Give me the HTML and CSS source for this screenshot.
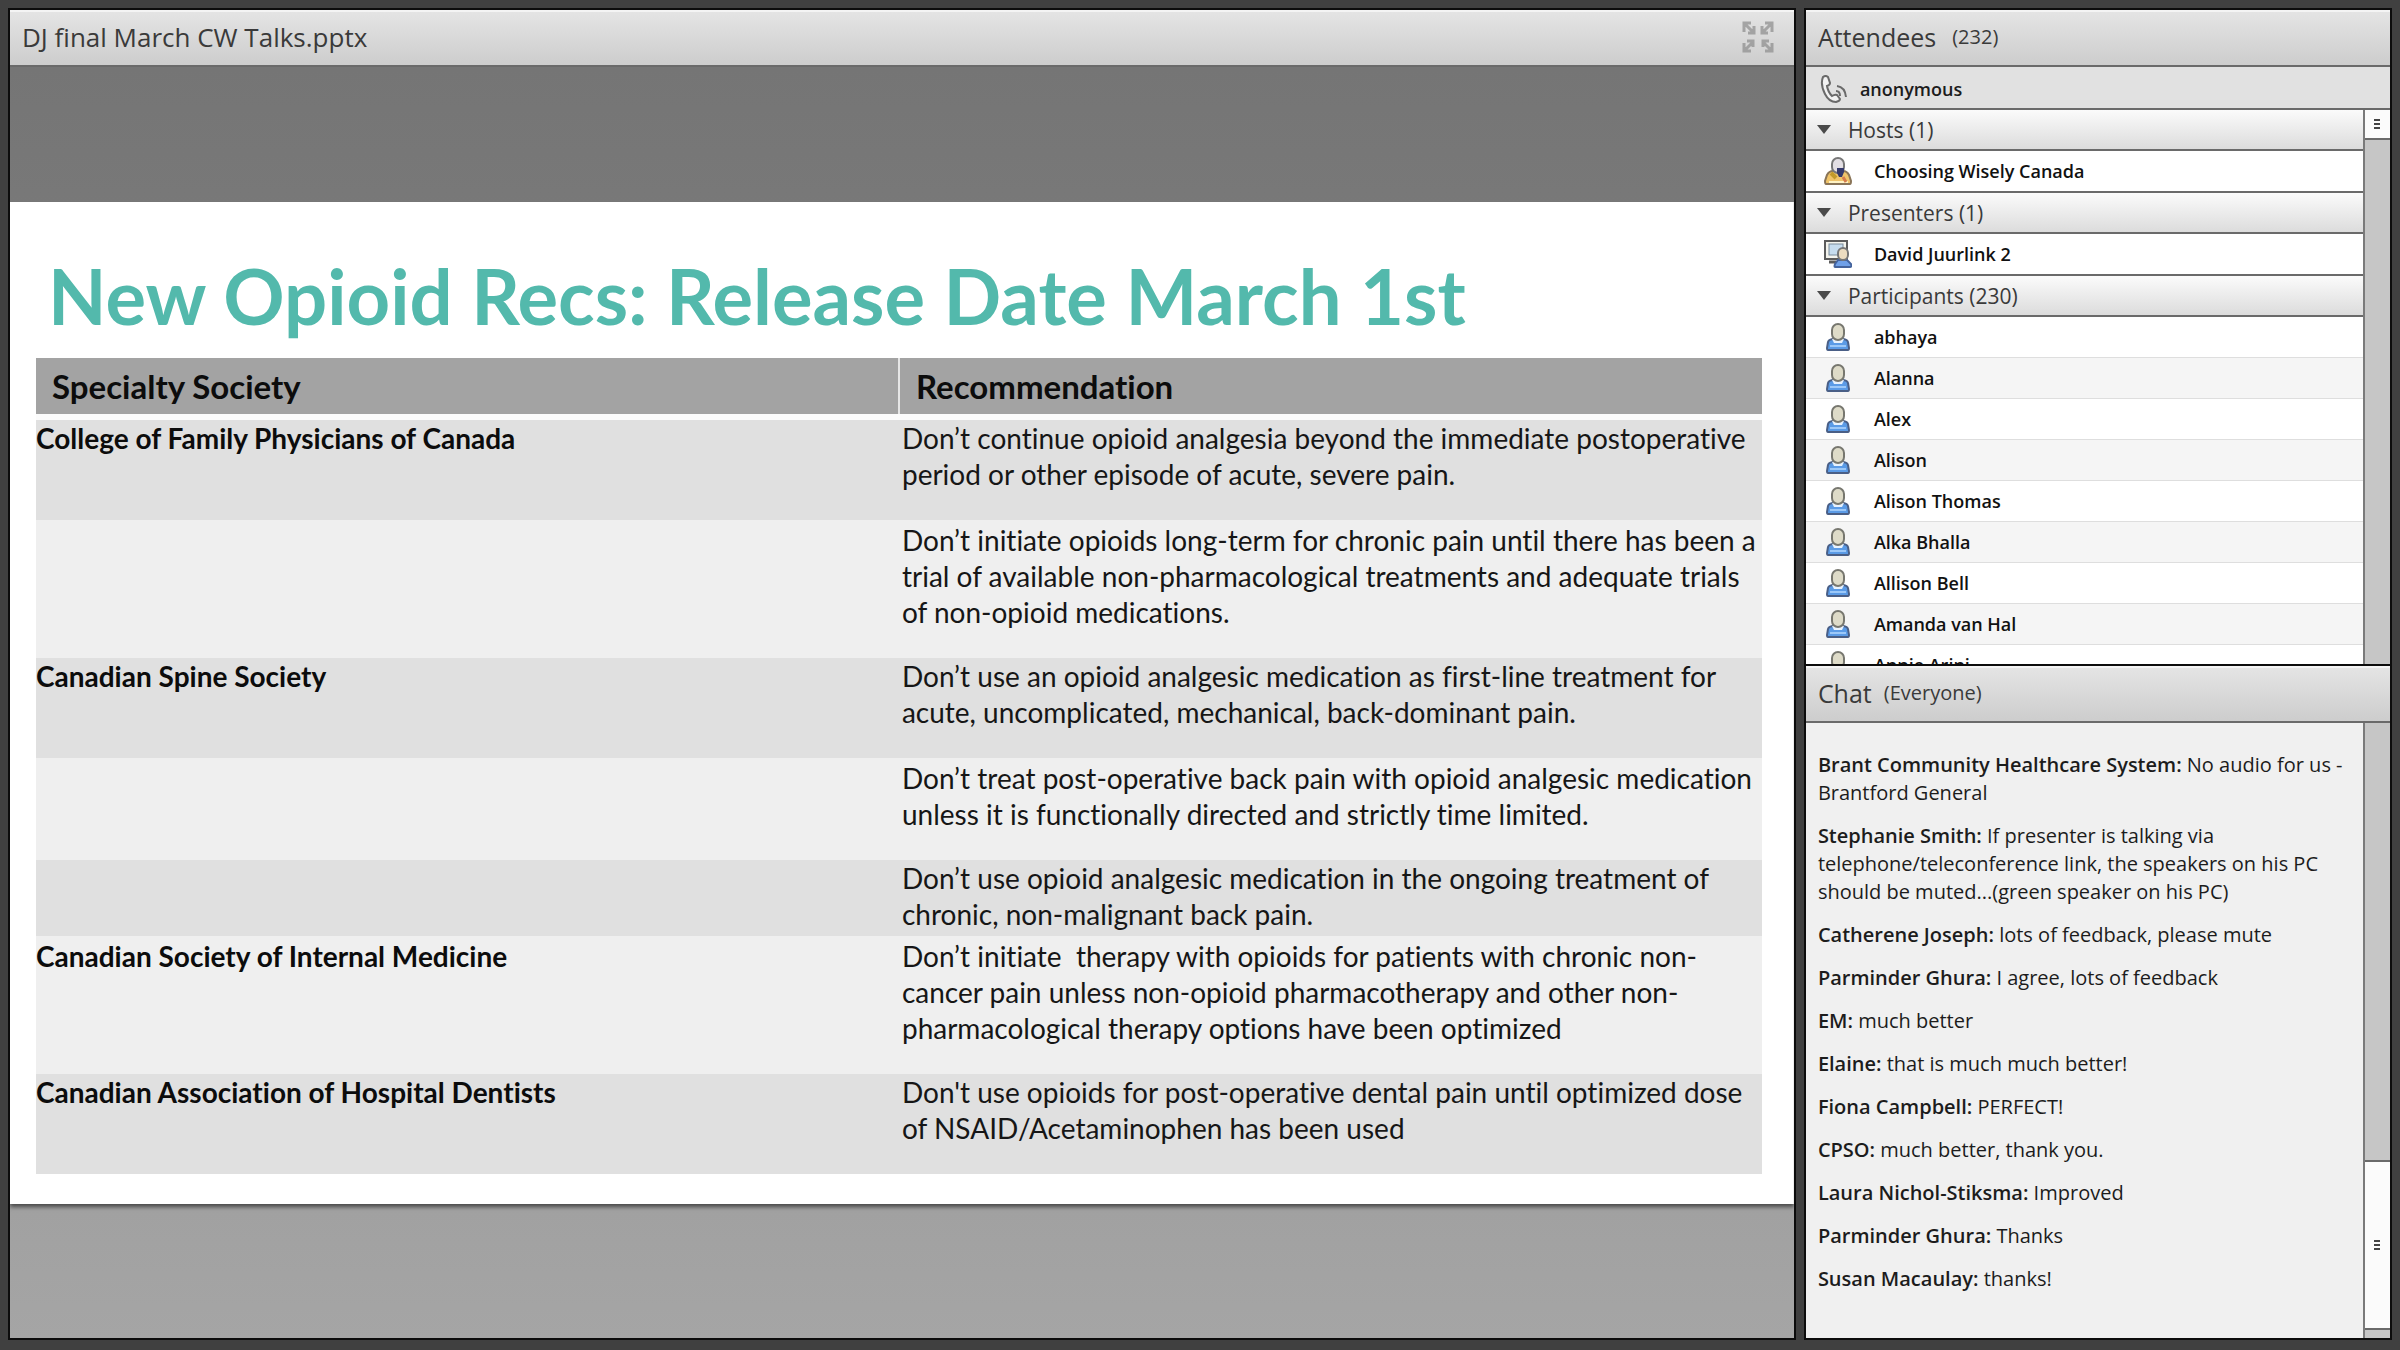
FILE: index.html
```html
<!DOCTYPE html>
<html lang="en">
<head>
<meta charset="utf-8">
<title>DJ final March CW Talks</title>
<link rel="stylesheet" href="styles.css">
</head>
<body>
<svg class="defs" aria-hidden="true">
  <symbol id="person" viewBox="0 0 24 28">
    <path d="M2 27 Q1 27 1 25 L2 19 Q3 16 8 16 H16 Q21 16 22 19 L23 25 Q23 27 22 27 Z" fill="#5b9be6" stroke="#4a5f86" stroke-width="2"/>
    <path d="M6 16 L8 20 H16 L18 16 Z" fill="#e8f2fd"/>
    <path d="M4 23 H20" stroke="#9cc8f8" stroke-width="2"/>
    <rect x="6" y="1" width="12" height="16" rx="6" fill="#dedbc8" stroke="#77776f" stroke-width="2"/>
  </symbol>
</svg>
<main class="room">
  <section class="pod share">
    <header class="bar">
      <h1 class="bar-title file">DJ final March CW Talks.pptx</h1>
      <button class="expand" type="button" aria-label="Full screen">
        <svg viewBox="0 0 32 32" width="32" height="32" fill="none" stroke="#8c8c8c" stroke-width="3">
          <path d="M2 11V2H9M3 3L12 12M12 5V12H6M30 11V2H23M29 3L20 12M20 5V12H26M2 22V30H9M3 29L11 21M5 20H11V26M30 22V30H23M29 29L21 21M27 20H21V26"/>
        </svg>
      </button>
    </header>
    <div class="stage">
      <article class="slide">
        <h2 class="slide-title">New Opioid Recs: Release Date March 1st</h2>
        <table class="recs">
          <thead>
            <tr><th scope="col">Specialty Society</th><th scope="col">Recommendation</th></tr>
          </thead>
          <tbody>
            <tr><th scope="row">College of Family Physicians of Canada</th><td>Don’t continue opioid analgesia beyond the immediate postoperative period or other episode of acute, severe pain.</td></tr>
            <tr class="lower"><td></td><td>Don’t initiate opioids long-term for chronic pain until there has been a trial of available non-pharmacological treatments and adequate trials of non-opioid medications.</td></tr>
            <tr><th scope="row">Canadian Spine Society</th><td>Don’t use an opioid analgesic medication as first-line treatment for acute, uncomplicated, mechanical, back-dominant pain.</td></tr>
            <tr class="lower"><td></td><td>Don’t treat post-operative back pain with opioid analgesic medication unless it is functionally directed and strictly time limited.</td></tr>
            <tr class="tight"><td></td><td>Don’t use opioid analgesic medication in the ongoing treatment of chronic, non-malignant back pain.</td></tr>
            <tr class="lower"><th scope="row">Canadian Society of Internal Medicine</th><td>Don’t initiate&nbsp; therapy with opioids for patients with chronic non-cancer pain unless non-opioid pharmacotherapy and other non-pharmacological therapy options have been optimized</td></tr>
            <tr><th scope="row">Canadian Association of Hospital Dentists</th><td>Don't use opioids for post-operative dental pain until optimized dose of NSAID/Acetaminophen has been used</td></tr>
          </tbody>
        </table>
      </article>
    </div>
  </section>

  <div class="side">
    <section class="pod attendees">
      <header class="bar"><h2 class="bar-title">Attendees</h2><span class="bar-note wide">(232)</span></header>
      <div class="caller">
        <svg viewBox="0 0 28 28" width="28" height="28" fill="none" stroke="#6a6a6a" stroke-width="2">
          <path d="M3 2 Q6 0 8 2 L10 8 Q10 10 7 11 Q8 17 12 21 Q15 19 17 20 L20 24 Q20 26 16 27 Q9 27 5 19 Q0 9 3 2Z" fill="#f2f2f2"/>
          <path d="M16 16 Q20 16 20 21M17 11 Q25 12 26 22"/>
        </svg>
        <span>anonymous</span>
      </div>
      <div class="scroller">
        <div class="roster">
          <h3><button class="group" type="button"><span class="tri"></span>Hosts (1)</button></h3>
          <ul class="people framed">
            <li><svg viewBox="0 0 28 28" width="28" height="28">
              <path d="M2 27Q1 27 1 24L3 18Q5 14 9 14H19Q23 14 25 18L27 24Q27 27 26 27Z" fill="#f0c46a" stroke="#8a7558" stroke-width="2"/>
              <path d="M5 25H24" stroke="#fff3c4" stroke-width="2"/>
              <rect x="8" y="1" width="12" height="15" rx="6" fill="#e3dfe4" stroke="#777" stroke-width="2"/>
              <path d="M13 11H20V15L18 20H15L13 16Z" fill="#34396b"/><path d="M7 16L12 21" stroke="#c39a2a" stroke-width="4"/><path d="M19 20L22 25" stroke="#d57b4c" stroke-width="3"/>
            </svg>Choosing Wisely Canada</li>
          </ul>
          <h3><button class="group" type="button"><span class="tri"></span>Presenters (1)</button></h3>
          <ul class="people framed">
            <li><svg viewBox="0 0 28 28" width="28" height="28">
              <rect x="1" y="1" width="22" height="18" fill="#f4f4ee" stroke="#5c5c5c" stroke-width="2"/>
              <rect x="5" y="4" width="14" height="11" fill="#c6dcee" stroke="#7b8c9c"/>
              <path d="M5 22H12" stroke="#5c5c5c" stroke-width="3"/>
              <path d="M11 27Q10 27 11 24L14 20H23L27 24Q28 27 26 27Z" fill="#6fa0e8" stroke="#44639c" stroke-width="2"/>
              <rect x="14" y="8" width="10" height="12" rx="5" fill="#ecdcc0" stroke="#777" stroke-width="2"/>
            </svg>David Juurlink 2</li>
          </ul>
          <h3><button class="group" type="button"><span class="tri"></span>Participants (230)</button></h3>
          <ul class="people striped">
            <li><svg class="avatar"><use href="#person"/></svg>abhaya</li>
            <li><svg class="avatar"><use href="#person"/></svg>Alanna</li>
            <li><svg class="avatar"><use href="#person"/></svg>Alex</li>
            <li><svg class="avatar"><use href="#person"/></svg>Alison</li>
            <li><svg class="avatar"><use href="#person"/></svg>Alison Thomas</li>
            <li><svg class="avatar"><use href="#person"/></svg>Alka Bhalla</li>
            <li><svg class="avatar"><use href="#person"/></svg>Allison Bell</li>
            <li><svg class="avatar"><use href="#person"/></svg>Amanda van Hal</li>
            <li><svg class="avatar"><use href="#person"/></svg>Annie Arini</li>
          </ul>
        </div>
        <div class="track"><div class="thumb thumb-top"><span class="grip"></span></div></div>
      </div>
    </section>

    <section class="pod chat">
      <header class="bar"><h2 class="bar-title">Chat</h2><span class="bar-note">(Everyone)</span></header>
      <div class="scroller">
        <div class="log">
          <p><b>Brant Community Healthcare System:</b> No audio for us - Brantford General</p>
          <p><b>Stephanie Smith:</b> If presenter is talking via telephone/teleconference link, the speakers on his PC should be muted...(green speaker on his PC)</p>
          <p><b>Catherene Joseph:</b> lots of feedback, please mute</p>
          <p><b>Parminder Ghura:</b> I agree, lots of feedback</p>
          <p><b>EM:</b> much better</p>
          <p><b>Elaine:</b> that is much much better!</p>
          <p><b>Fiona Campbell:</b> PERFECT!</p>
          <p><b>CPSO:</b> much better, thank you.</p>
          <p><b>Laura Nichol-Stiksma:</b> Improved</p>
          <p><b>Parminder Ghura:</b> Thanks</p>
          <p><b>Susan Macaulay:</b> thanks!</p>
        </div>
        <div class="track end"><div class="thumb thumb-end"><span class="grip"></span></div></div>
      </div>
    </section>
  </div>
</main>
</body>
</html>
```
FILE: styles.css
```css
* { box-sizing: border-box; }

body {
  margin: 0;
  background: #404040;
  color: #1c1c1c;
  font-family: "Open Sans", "Noto Sans", sans-serif;
}

h1, h2, h3, p, ul { margin: 0; padding: 0; font-weight: 400; }
ul { list-style: none; }
button { border: 0; padding: 0; font: inherit; color: inherit; background: none; }
svg { flex: none; }
.defs { position: absolute; width: 0; height: 0; }

.room {
  display: grid;
  grid-template-columns: minmax(0, 76fr) minmax(0, 25fr);
  gap: 8px;
  min-height: 100vh;
  padding: 8px 8px 10px;
}

/* Pods */
.pod {
  display: flex;
  flex-direction: column;
  min-height: 0;
  border: 2px solid #0c0c0c;
}
.bar {
  display: flex;
  align-items: center;
  flex: none;
  height: 57px;
  padding: 0 20px 4px 12px;
  border-top: 2px solid #f4f4f4;
  border-bottom: 2px solid #6a6a6a;
  background: linear-gradient(#e4e4e4, #cdcdcd);
  color: #3a3a3a;
}
.bar-title { font-size: 25px; line-height: 32px; }
.file { font-size: 26px; }
.bar-note { margin-left: 12px; font-size: 20px; line-height: 32px; }
.bar-note.wide { margin-left: 16px; }
.expand { width: 32px; height: 32px; margin-left: auto; opacity: .7; }

/* Shared slide */
.stage {
  display: flex;
  flex-direction: column;
  justify-content: center;
  flex: 1;
  background: linear-gradient(#757575, #7b7b7b 20%, #9d9d9d 80%, #a5a5a5);
}
.slide {
  padding: 54px 32px 30px 26px;
  background: #fff;
  box-shadow: 0 3px 4px #4a4a4a;
  clip-path: inset(0 0 -12px 0);
  font-family: Lato, Carlito, sans-serif;
  font-variant-ligatures: none;
  color: #161616;
}
.slide-title {
  padding: 0 12px 22px;
  font-size: 76px;
  line-height: 80px;
  font-weight: 700;
  color: #53b9ac;
}
.recs {
  width: 100%;
  table-layout: fixed;
  border-collapse: collapse;
  font-size: 28px;
  line-height: 36px;
  text-align: left;
}
.recs th, .recs td { padding: 0 4px 28px 3px; vertical-align: top; }
.recs tbody th { padding-left: 0; color: #0c0c0c; }
.recs thead th {
  padding: 10px 16px;
  background: #a3a3a3;
  border-bottom: 6px solid #fbfbfb;
  font-size: 33px;
  color: #0c0c0c;
}
.recs thead th + th { border-left: 2px solid #e6e6e6; }
.recs tbody tr { background: #efefef; }
.recs tbody tr:nth-child(odd) { background: #e0e0e0; }
.recs .lower > * { padding-top: 2px; }
.recs .tight > * { padding-bottom: 4px; }

/* Right column */
.side {
  display: grid;
  grid-template-rows: minmax(0, 656fr) minmax(0, 676fr);
  height: calc(100vh - 18px);
}
.attendees { border-bottom: 0; }
.scroller { display: flex; flex: 1; min-height: 0; }

.caller {
  display: flex;
  align-items: center;
  gap: 12px;
  flex: none;
  height: 43px;
  padding: 2px 14px 0;
  border-bottom: 2px solid #6a6a6a;
  background: #e1e1e1;
  font-size: 18px;
  font-weight: 600;
}
.roster { flex: 1; min-width: 0; overflow: hidden; background: #fff; }
.group {
  display: flex;
  align-items: center;
  gap: 17px;
  width: 100%;
  height: 39px;
  padding: 0 11px;
  background: linear-gradient(#fbfbfb, #dcdcdc);
  font-size: 21px;
  color: #3a3a3a;
}
.tri {
  border: 7px solid transparent;
  border-top: 9px solid #4a4a4a;
  border-bottom: 0;
}
.people li {
  display: flex;
  align-items: center;
  height: 41px;
  padding-left: 18px;
  gap: 22px;
  font-size: 18px;
  font-weight: 600;
  color: #111;
}
.framed { border: solid #6a6a6a; border-width: 2px 0; }
.framed li { height: 40px; }
.striped { border-top: 2px solid #6a6a6a; }
.striped li { border-bottom: 1px solid #dedede; }
.striped li:nth-child(even) { background: #f5f5f5; }
.avatar { width: 24px; height: 28px; margin: 0 2px; }

.track {
  display: flex;
  flex-direction: column;
  flex: none;
  width: 27px;
  border-left: 2px solid #7a7a7a;
  background: #c6c6c6;
}
.track.end { justify-content: flex-end; padding-bottom: 8px; }
.thumb {
  display: grid;
  place-items: center;
  background: #fbfbfb;
  border-bottom: 2px solid #6a6a6a;
}
.thumb-top { height: 30px; }
.thumb-end { height: 28%; border-top: 2px solid #6a6a6a; }
.grip {
  width: 6px;
  height: 10px;
  background: repeating-linear-gradient(#444 0 2px, transparent 2px 4px);
}

.log {
  display: flex;
  flex-direction: column;
  gap: 15px;
  flex: 1;
  min-width: 0;
  padding: 28px 16px 28px 12px;
  overflow: hidden;
  background: #f0f0f0;
  font-size: 20px;
  line-height: 28px;
}
.log b { font-weight: 600; }
```
